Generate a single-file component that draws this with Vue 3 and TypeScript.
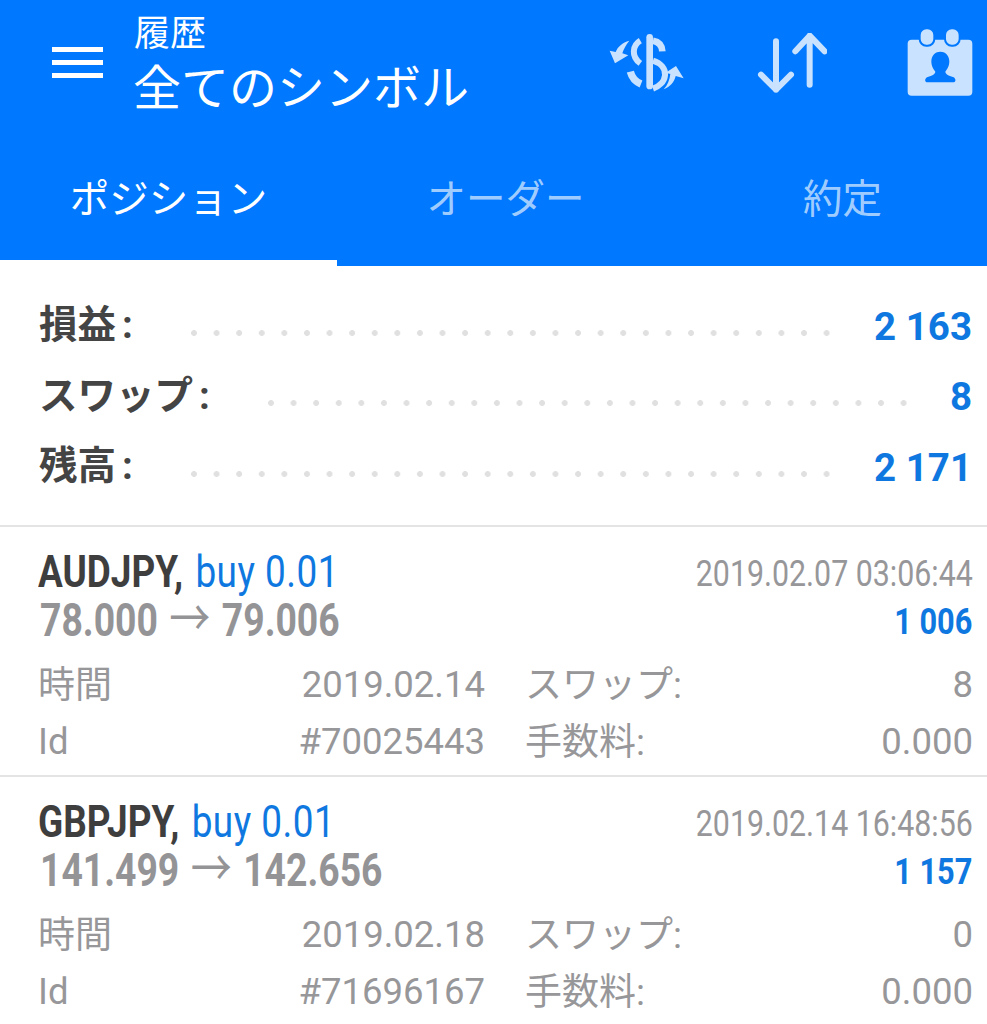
<script setup lang="ts">
interface Summary {
  label: string
  value: string
}

interface Deal {
  symbol: string
  volume: string
  from: string
  to: string
  opened: string
  profit: string
  closed: string
  swap: string
  id: string
  fee: string
}

const tabs = ['ポジション', 'オーダー', '約定']

const summary: Summary[] = [
  { label: '損益', value: '2 163' },
  { label: 'スワップ', value: '8' },
  { label: '残高', value: '2 171' },
]

const deals: Deal[] = [
  {
    symbol: 'AUDJPY,',
    volume: 'buy 0.01',
    from: '78.000',
    to: '79.006',
    opened: '2019.02.07 03:06:44',
    profit: '1 006',
    closed: '2019.02.14',
    swap: '8',
    id: '#70025443',
    fee: '0.000',
  },
  {
    symbol: 'GBPJPY,',
    volume: 'buy 0.01',
    from: '141.499',
    to: '142.656',
    opened: '2019.02.14 16:48:56',
    profit: '1 157',
    closed: '2019.02.18',
    swap: '0',
    id: '#71696167',
    fee: '0.000',
  },
]
</script>

<template>
  <div class="page">
    <header class="bar">
      <div class="top">
        <div class="menu"><i /><i /><i /></div>
        <div class="titles">
          <div class="sub">履歴</div>
          <div class="title">全てのシンボル</div>
        </div>
        <svg class="ico dollar" viewBox="50 60 240 190" width="80" height="63.33">
          <rect x="168" y="72" width="20" height="166" rx="10" fill="#c8e2ff" />
          <g fill="none" stroke="#c8e2ff" stroke-width="20">
            <path d="M188 92C205 95 215 105 216 124" />
            <path d="M150 92C126 106 122 140 150 160" stroke-width="18" />
            <path d="M188 152C212 160 226 176 224 196C222 216 205 230 188 236" stroke-width="18" />
            <path d="M120 185C125 205 135 215 152 222" stroke-width="22" />
          </g>
          <path d="M117 92C96 98 82 110 76 126L58 122L74 160L114 136L96 130C100 118 106 105 117 92Z" fill="#c8e2ff" />
          <path d="M220 238C240 230 252 216 256 198L280 205L257 168L226 188L240 192C238 210 232 225 220 238Z" fill="#c8e2ff" />
        </svg>
        <svg class="ico arrows" viewBox="500 70 210 180" width="70" height="60">
          <g fill="none" stroke="#c8e2ff" stroke-width="18" stroke-linecap="round" stroke-linejoin="round">
            <path d="M557 95V240M512 195L557 240L602 195" />
            <path d="M658 225V78M615 125L658 78L703 125" />
          </g>
        </svg>
        <svg class="ico cal" viewBox="950 50 200 210" width="66.67" height="70">
          <rect x="952" y="88" width="194" height="168" rx="12" fill="#c8e2ff" />
          <rect x="988" y="54" width="44" height="52" rx="20" fill="#c8e2ff" stroke="#0078ff" stroke-width="6" />
          <rect x="1064" y="54" width="44" height="52" rx="20" fill="#c8e2ff" stroke="#0078ff" stroke-width="6" />
          <path d="M1050 124C1068 124 1077 138 1077 153C1077 168 1070 178 1065 184C1066 192 1075 196 1088 200C1098 204 1098 216 1088 216L1012 216C1002 216 1002 204 1012 200C1025 196 1034 192 1035 184C1030 178 1023 168 1023 153C1023 138 1032 124 1050 124Z" fill="#0078ff" />
        </svg>
      </div>
      <nav class="tabs">
        <div v-for="(tab, i) in tabs" :key="tab" class="tab" :class="{ active: i === 0 }">{{ tab }}</div>
      </nav>
    </header>

    <section class="summary">
      <div v-for="row in summary" :key="row.label" class="sum-row">
        <span class="sum-label">{{ row.label }}<span class="colon">:</span></span>
        <span class="dots" />
        <span class="sum-value">{{ row.value }}</span>
      </div>
    </section>

    <section v-for="deal in deals" :key="deal.id" class="deal">
      <div class="head">
        <span class="cond line1"><b class="symbol">{{ deal.symbol }}</b><span class="volume">{{ deal.volume }}</span></span>
        <span class="cond right opened">{{ deal.opened }}</span>
      </div>
      <div class="head second">
        <span class="cond prices">{{ deal.from }}<span class="arrow">→</span>{{ deal.to }}</span>
        <span class="cond right profit">{{ deal.profit }}</span>
      </div>
      <div class="grid">
        <span class="cjk">時間</span>
        <span class="num">{{ deal.closed }}</span>
        <span class="cjk lab2">スワップ:</span>
        <span class="num">{{ deal.swap }}</span>
        <span>Id</span>
        <span class="num">{{ deal.id }}</span>
        <span class="cjk lab2">手数料:</span>
        <span class="num">{{ deal.fee }}</span>
      </div>
    </section>
  </div>
</template>

<style scoped>
.page {
  width: 987px;
  height: 1024px;
  overflow: hidden;
  background: #fff;
  font-family: Roboto, "Noto Sans CJK JP", sans-serif;
}
.bar {
  height: 266px;
  background: #0078ff;
  color: #fff;
}
.top {
  height: 134px;
  display: flex;
  align-items: flex-start;
}
.menu {
  width: 51px;
  margin: 47px 30px 0 52px;
  display: flex;
  flex-direction: column;
  gap: 8px;
}
.menu i {
  display: block;
  height: 5px;
  background: #fff;
}
.titles {
  padding-top: 13px;
  width: 442px;
  flex: none;
}
.sub {
  font-size: 36px;
  line-height: 42px;
  margin-left: 1px;
}
.title {
  font-size: 48px;
  line-height: 68px;
  white-space: nowrap;
}
.ico {
  flex: none;
}
.dollar {
  margin: 30px 0 0 31.67px;
}
.arrows {
  margin: 33.33px 0 0 70px;
}
.cal {
  margin: 26.67px 0 0 80px;
}
.tabs {
  display: grid;
  grid-template-columns: repeat(3, 337px);
  height: 132px;
}
.tab {
  height: 132px;
  box-sizing: border-box;
  padding-top: 44px;
  text-align: center;
  font-size: 39.5px;
  line-height: 44px;
  color: rgba(255, 255, 255, 0.65);
}
.tab.active {
  color: #fff;
  border-bottom: 6px solid #fff;
}
.summary {
  height: 261px;
  box-sizing: border-box;
  padding: 25px 15px 0 39px;
  border-bottom: 2px solid #e4e4e4;
}
.sum-row {
  height: 70.5px;
  display: flex;
  align-items: center;
}
.sum-label {
  font-size: 38.5px;
  font-weight: 700;
  color: #444;
  margin: 0 58px 10px 0;
}
.colon {
  margin-left: 6px;
}
.dots {
  flex: 1;
  height: 6px;
  margin-top: 13px;
  background: radial-gradient(circle at 3px 3px, #e0e0e0 2.6px, transparent 3.2px) 0 0 / 22.6px 6px repeat-x;
}
.sum-value {
  font-size: 38.5px;
  font-weight: 700;
  color: #0f78e0;
  margin-left: 42px;
}
.deal {
  height: 250px;
  box-sizing: border-box;
  padding: 24px 14.5px 0 38px;
  border-bottom: 2px solid #e4e4e4;
}
.head {
  display: flex;
  justify-content: space-between;
  align-items: center;
  height: 46px;
}
.second {
  height: 48px;
}
.cond {
  display: inline-block;
  white-space: nowrap;
  line-height: 40px;
  transform: scaleX(0.82);
  transform-origin: left center;
}
.cond.right {
  transform-origin: right center;
}
.line1 {
  margin-top: 6px;
}
.symbol {
  font-size: 45px;
  color: #3e3e3e;
}
.volume {
  font-size: 45px;
  letter-spacing: 0.6px;
  color: #0f78e0;
  margin-left: 15px;
}
.opened {
  font-size: 37px;
  color: #97979a;
}
.prices {
  font-size: 45.5px;
  font-weight: 700;
  color: #949497;
  margin: 0 0 4px 2px;
}
.arrow {
  font-size: 50px;
  font-weight: 400;
  line-height: 1;
  margin: 0 14px;
}
.profit {
  font-size: 37.5px;
  font-weight: 700;
  color: #0f78e0;
}
.grid {
  display: grid;
  grid-template-columns: 202px 245px 200px 288px;
  grid-auto-rows: 57px;
  align-items: center;
  margin: 11px -1px 0;
  padding-left: 1px;
  font-size: 36.5px;
  color: #97979a;
}
.cjk {
  font-size: 37px;
  margin-bottom: 5px;
}
.lab2 {
  padding-left: 40px;
  white-space: nowrap;
}
.num {
  text-align: right;
}
</style>
